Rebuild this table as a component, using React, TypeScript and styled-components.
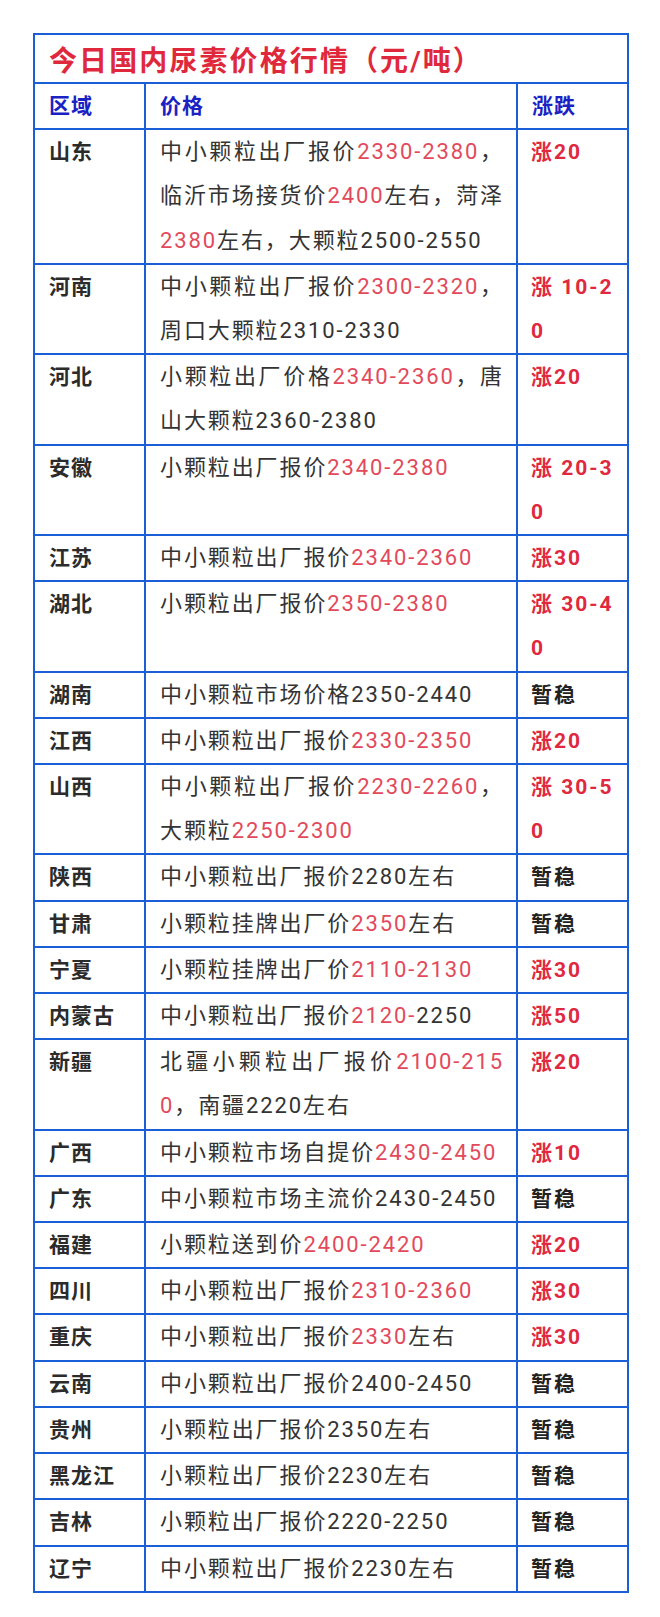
import styled, { createGlobalStyle } from 'styled-components';

const GlobalStyle = createGlobalStyle`
  body {
    margin: 0;
    background: #ffffff;
    font-family: Roboto, "Noto Sans CJK SC", sans-serif;
  }
`;

// 页面外层
const Page = styled.div`
  padding: 33px 33px 26px 33px;
  background: #ffffff;
`;

const Table = styled.table`
  width: 594px;
  border-collapse: collapse;
  table-layout: fixed;
  border: 2px solid #1a5ed8;
`;

const TitleCell = styled.th`
  height: 47px;
  padding: 0 0 0 14px;
  border: 2px solid #1a5ed8;
  text-align: left;
  font-size: 28px;
  font-weight: 700;
  letter-spacing: 2.1px;
  color: #e0283c;
`;

const HeadCell = styled.th`
  padding: 0 0 0 14px;
  border: 2px solid #1a5ed8;
  text-align: left;
  line-height: 44.2px;
  font-size: 21px;
  font-weight: 700;
  letter-spacing: 1px;
  color: #1a22c4;
`;

const Cell = styled.td`
  padding: 0 12px 0 14px;
  border: 2px solid #1a5ed8;
  vertical-align: top;
  line-height: 44.2px;
  font-size: 22px;
  letter-spacing: 1.9px;
  color: #333333;
`;

const RegionCell = styled(Cell)`
  font-size: 21px;
  font-weight: 700;
  letter-spacing: 1px;
  color: #2b2b2b;
`;

const PriceCell = styled(Cell)`
  text-align: justify;
  word-break: break-all;
`;

// 涨跌列：上涨为红色，暂稳为深色
const ChangeCell = styled(Cell)<{ $up: boolean }>`
  padding: 0 8px 0 13px;
  font-size: 21px;
  font-weight: 700;
  letter-spacing: 2px;
  word-break: break-all;
  color: ${(p) => (p.$up ? '#e0283f' : '#222222')};
`;

const Red = styled.span`
  color: #e24a5c;
`;

type Row = { region: string; price: string; change: string };

// 方括号里的数字显示为红色
const rows: Row[] = [
  { region: '山东', price: '中小颗粒出厂报价[2330-2380]，临沂市场接货价[2400]左右，菏泽[2380]左右，大颗粒2500-2550', change: '涨20' },
  { region: '河南', price: '中小颗粒出厂报价[2300-2320]，周口大颗粒2310-2330', change: '涨 10-20' },
  { region: '河北', price: '小颗粒出厂价格[2340-2360]，唐山大颗粒2360-2380', change: '涨20' },
  { region: '安徽', price: '小颗粒出厂报价[2340-2380]', change: '涨 20-30' },
  { region: '江苏', price: '中小颗粒出厂报价[2340-2360]', change: '涨30' },
  { region: '湖北', price: '小颗粒出厂报价[2350-2380]', change: '涨 30-40' },
  { region: '湖南', price: '中小颗粒市场价格2350-2440', change: '暂稳' },
  { region: '江西', price: '中小颗粒出厂报价[2330-2350]', change: '涨20' },
  { region: '山西', price: '中小颗粒出厂报价[2230-2260]，大颗粒[2250-2300]', change: '涨 30-50' },
  { region: '陕西', price: '中小颗粒出厂报价2280左右', change: '暂稳' },
  { region: '甘肃', price: '小颗粒挂牌出厂价[2350]左右', change: '暂稳' },
  { region: '宁夏', price: '小颗粒挂牌出厂价[2110-2130]', change: '涨30' },
  { region: '内蒙古', price: '中小颗粒出厂报价[2120-]2250', change: '涨50' },
  { region: '新疆', price: '北疆小颗粒出厂报价[2100-2150]，南疆2220左右', change: '涨20' },
  { region: '广西', price: '中小颗粒市场自提价[2430-2450]', change: '涨10' },
  { region: '广东', price: '中小颗粒市场主流价2430-2450', change: '暂稳' },
  { region: '福建', price: '小颗粒送到价[2400-2420]', change: '涨20' },
  { region: '四川', price: '中小颗粒出厂报价[2310-2360]', change: '涨30' },
  { region: '重庆', price: '中小颗粒出厂报价[2330]左右', change: '涨30' },
  { region: '云南', price: '中小颗粒出厂报价2400-2450', change: '暂稳' },
  { region: '贵州', price: '小颗粒出厂报价2350左右', change: '暂稳' },
  { region: '黑龙江', price: '小颗粒出厂报价2230左右', change: '暂稳' },
  { region: '吉林', price: '小颗粒出厂报价2220-2250', change: '暂稳' },
  { region: '辽宁', price: '中小颗粒出厂报价2230左右', change: '暂稳' },
];

const renderPrice = (text: string) =>
  text.split(/[[\]]/).map((part, i) => (i % 2 === 1 ? <Red key={i}>{part}</Red> : <span key={i}>{part}</span>));

const App = () => {
  return (
    <Page>
      <GlobalStyle />
      <Table>
        <colgroup>
          <col style={{ width: 111 }} />
          <col style={{ width: 372 }} />
          <col style={{ width: 111 }} />
        </colgroup>
        <thead>
          <tr>
            <TitleCell colSpan={3}>今日国内尿素价格行情（元/吨）</TitleCell>
          </tr>
          <tr>
            <HeadCell>区域</HeadCell>
            <HeadCell>价格</HeadCell>
            <HeadCell>涨跌</HeadCell>
          </tr>
        </thead>
        <tbody>
          {rows.map((r) => (
            <tr key={r.region}>
              <RegionCell>{r.region}</RegionCell>
              <PriceCell>{renderPrice(r.price)}</PriceCell>
              <ChangeCell $up={r.change.startsWith('涨')}>{r.change}</ChangeCell>
            </tr>
          ))}
        </tbody>
      </Table>
    </Page>
  );
};

export default App;
